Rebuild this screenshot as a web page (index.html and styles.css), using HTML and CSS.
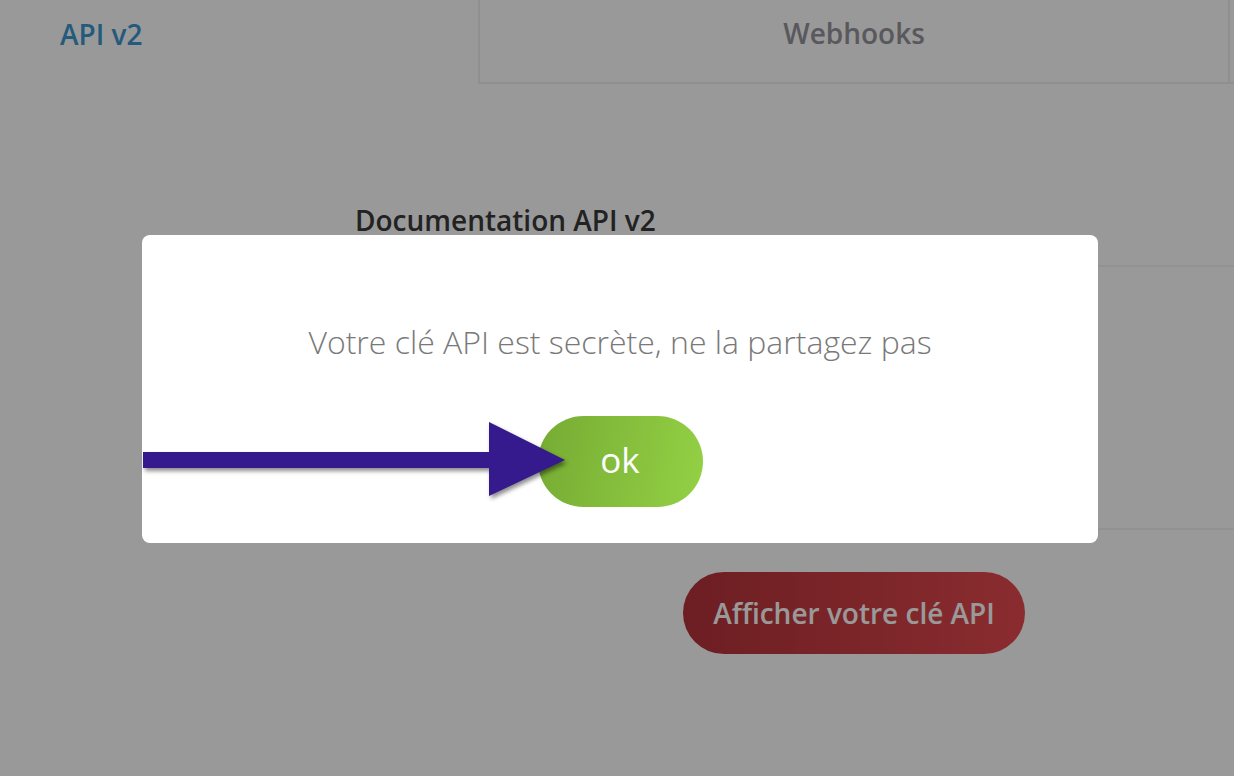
FILE: index.html
```html
<!DOCTYPE html>
<html lang="fr">
<head>
<meta charset="utf-8">
<title>API v2</title>
<link rel="stylesheet" href="styles.css">
</head>
<body>
  <div class="page">
    <nav class="tabs">
      <div class="tab tab-active">API v2</div>
      <div class="tab tab-inactive">Webhooks</div>
      <div class="tab-rest"></div>
    </nav>
    <section class="content">
      <h2 class="doc-title">Documentation API v2</h2>
      <div class="panel"></div>
      <div class="actions">
        <button class="show-key">Afficher votre clé API</button>
      </div>
    </section>
  </div>

  <div class="overlay">
    <div class="modal">
      <p class="modal-text">Votre clé API est secrète, ne la partagez pas</p>
      <button class="ok-btn">ok</button>
    </div>
  </div>

  <svg class="annotation-arrow" width="440" height="90" viewBox="0 0 440 90" aria-hidden="true">
    <rect x="0" y="35" width="350" height="16" fill="#341a8c"/>
    <polygon points="346,5 422,43 346,79" fill="#341a8c"/>
  </svg>
</body>
</html>
```

FILE: styles.css
```css
* { box-sizing: border-box; }

html, body {
  margin: 0;
  padding: 0;
  width: 1234px;
  height: 776px;
  overflow: hidden;
  background: #ffffff;
  font-family: "Open Sans", "Liberation Sans", sans-serif;
}

.page {
  width: 1234px;
  height: 776px;
}

.tabs {
  display: flex;
  height: 84px;
}

.tab {
  font-size: 28px;
  font-weight: 600;
  line-height: 1;
  display: flex;
  align-items: center;
}

.tab-active {
  width: 478px;
  padding-left: 60px;
  padding-bottom: 16px;
  color: #3d96cf;
}

.tab-inactive {
  width: 752px;
  justify-content: center;
  padding-bottom: 16px;
  color: #94949c;
  border-left: 2px solid #ededf6;
  border-right: 2px solid #ededf6;
  border-bottom: 2px solid #ededf6;
}

.tab-rest {
  flex: 1;
  border-bottom: 2px solid #ededf6;
}

.content {
  margin-left: 340px;
  padding-top: 116px;
}

.doc-title {
  margin: 0;
  padding-left: 15px;
  font-size: 28px;
  font-weight: 600;
  line-height: 40px;
  color: #393939;
}

.panel {
  margin-top: 25px;
  height: 265px;
  border-top: 2px solid #f4f4f4;
  border-bottom: 2px solid #f4f4f4;
}

.actions {
  display: flex;
  justify-content: flex-start;
  padding-left: 343px;
  padding-top: 42px;
}

.show-key {
  width: 342px;
  height: 82px;
  border: none;
  border-radius: 41px;
  background: linear-gradient(90deg, #b5333a 0%, #e64a50 100%);
  color: #ffffff;
  font-family: "Open Sans", "Liberation Sans", sans-serif;
  font-size: 28px;
  font-weight: 600;
}

.overlay {
  position: fixed;
  inset: 0;
  background: rgba(0, 0, 0, 0.4);
  display: flex;
  align-items: center;
  justify-content: center;
  padding-left: 6px;
  padding-top: 2px;
}

.modal {
  width: 956px;
  height: 308px;
  background: #ffffff;
  border-radius: 8px;
  display: flex;
  flex-direction: column;
  align-items: center;
  padding-top: 87px;
}

.modal-text {
  margin: 0;
  font-size: 32px;
  font-weight: 300;
  line-height: 40px;
  color: #797979;
}

.ok-btn {
  margin-top: 54px;
  width: 165px;
  height: 91px;
  border: none;
  border-radius: 46px;
  background: linear-gradient(100deg, #76ab33 0%, #94d145 100%);
  color: #ffffff;
  font-family: "Open Sans", "Liberation Sans", sans-serif;
  font-size: 35px;
  font-weight: 400;
  padding: 0 0 4px 0;
}

.annotation-arrow {
  position: absolute;
  left: 143px;
  top: 417px;
  overflow: visible;
  filter: drop-shadow(2px 3px 2px rgba(0, 0, 0, 0.45));
}
```
